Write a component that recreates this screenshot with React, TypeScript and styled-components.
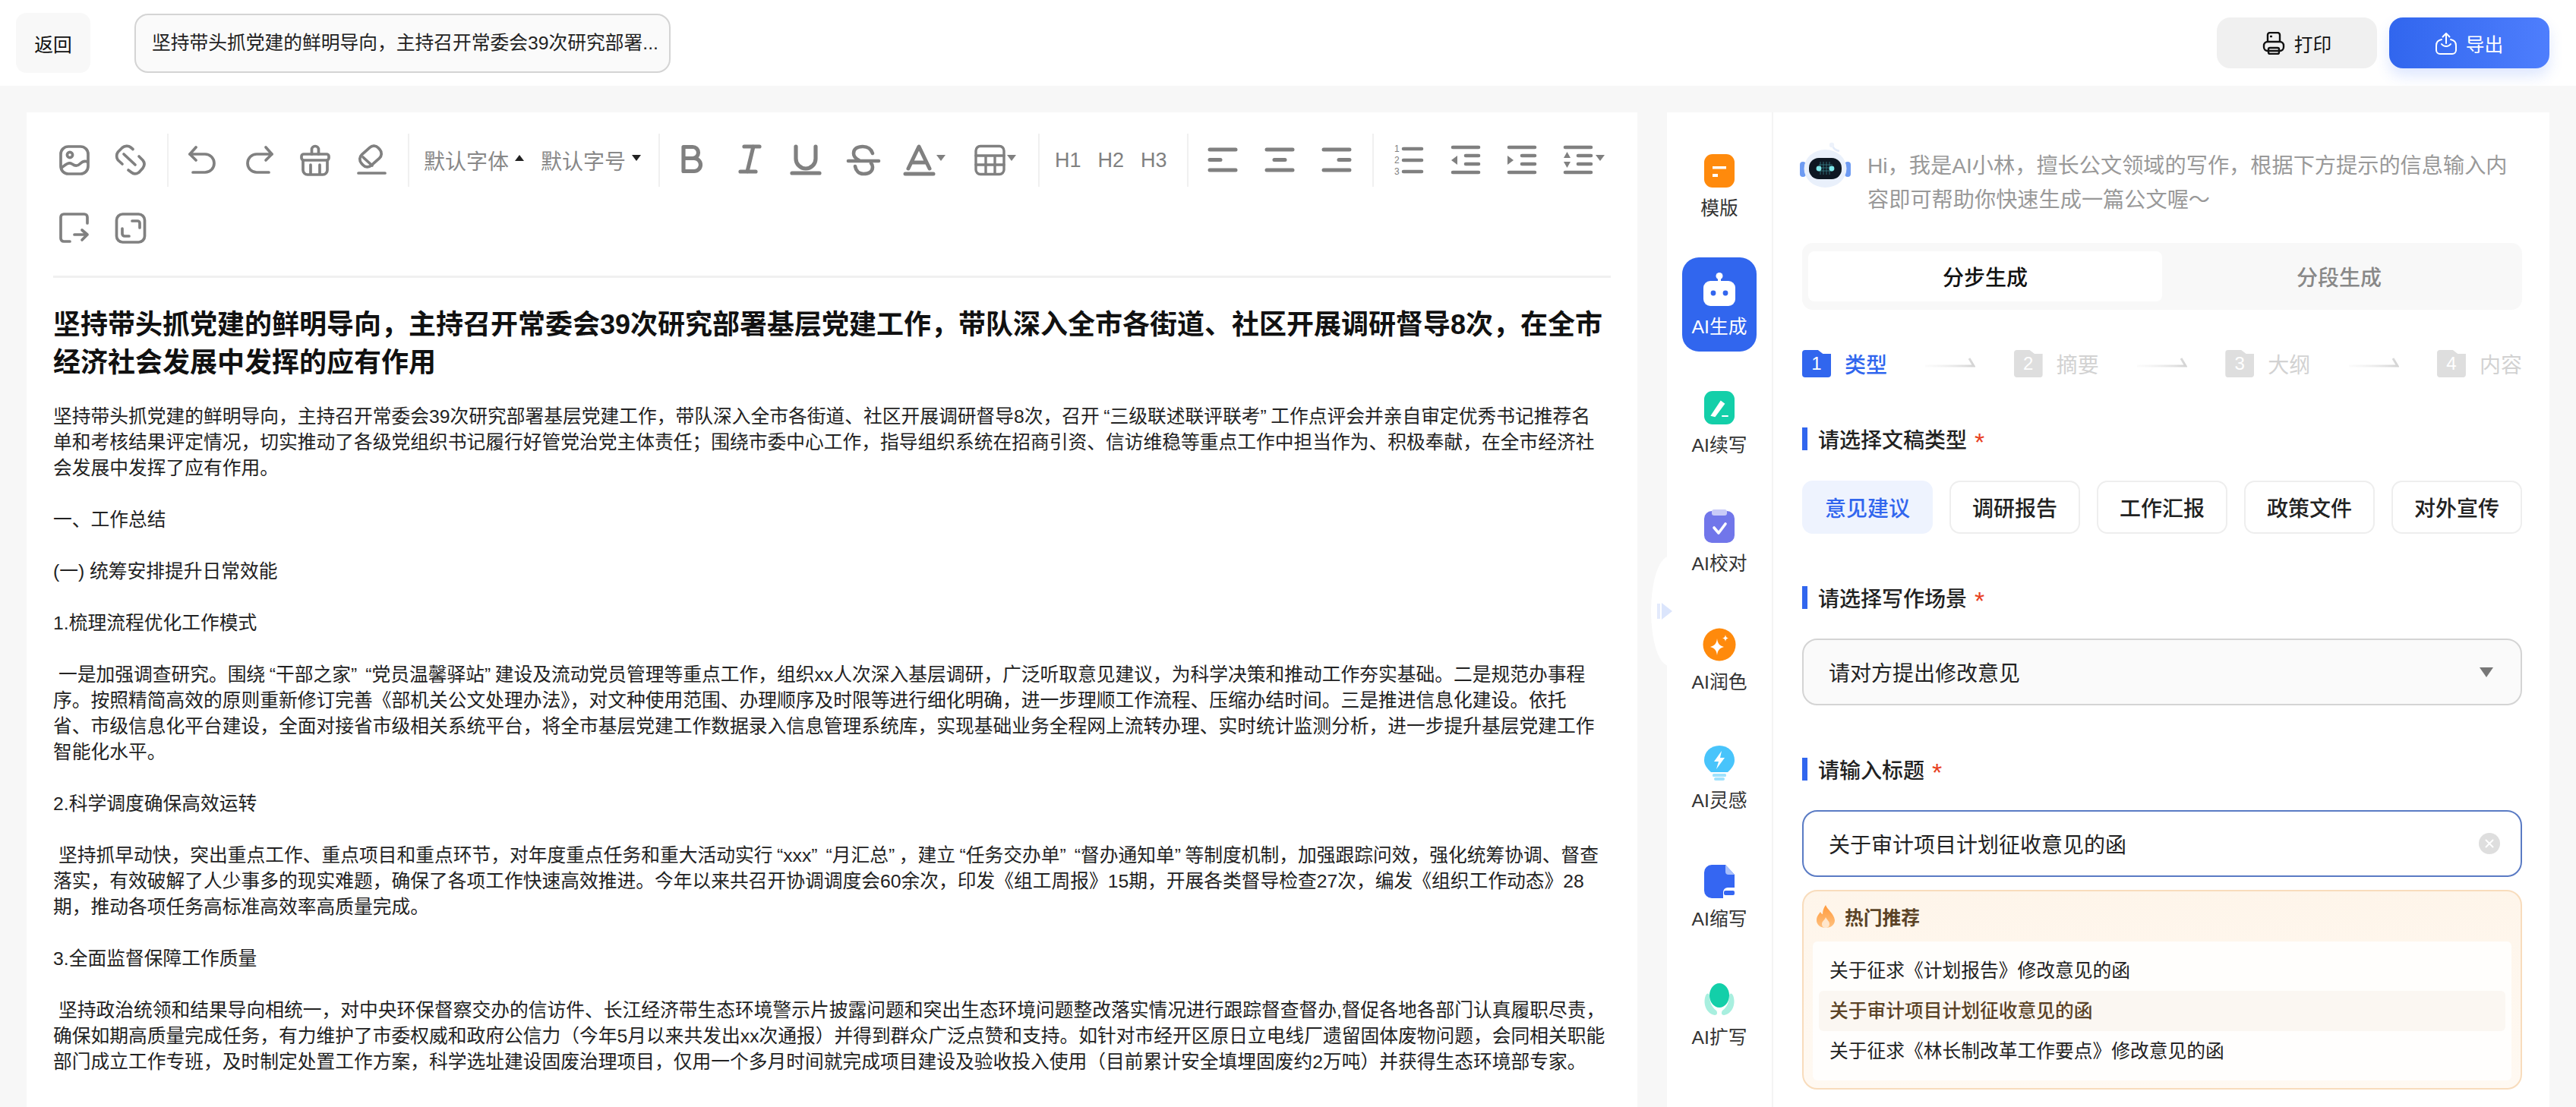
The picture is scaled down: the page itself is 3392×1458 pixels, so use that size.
import React from "react";
import styled, { createGlobalStyle } from "styled-components";

const TITLE_TEXT = "坚持带头抓党建的鲜明导向，主持召开常委会39次研究部署...";

const PARAGRAPHS = [
  [
    "坚持带头抓党建的鲜明导向，主持召开常委会39次研究部署基层党建工作，带队深入全市各街道、社区开展调研督导8次，召开“三级联述联评联考”工作点评会并亲自审定优秀书记推荐名",
    "单和考核结果评定情况，切实推动了各级党组织书记履行好管党治党主体责任；围绕市委中心工作，指导组织系统在招商引资、信访维稳等重点工作中担当作为、积极奉献，在全市经济社",
    "会发展中发挥了应有作用。",
  ],
  ["一、工作总结"],
  ["(一) 统筹安排提升日常效能"],
  ["1.梳理流程优化工作模式"],
  [
    " 一是加强调查研究。围绕“干部之家”“党员温馨驿站”建设及流动党员管理等重点工作，组织xx人次深入基层调研，广泛听取意见建议，为科学决策和推动工作夯实基础。二是规范办事程",
    "序。按照精简高效的原则重新修订完善《部机关公文处理办法》，对文种使用范围、办理顺序及时限等进行细化明确，进一步理顺工作流程、压缩办结时间。三是推进信息化建设。依托",
    "省、市级信息化平台建设，全面对接省市级相关系统平台，将全市基层党建工作数据录入信息管理系统库，实现基础业务全程网上流转办理、实时统计监测分析，进一步提升基层党建工作",
    "智能化水平。",
  ],
  ["2.科学调度确保高效运转"],
  [
    " 坚持抓早动快，突出重点工作、重点项目和重点环节，对年度重点任务和重大活动实行“xxx”“月汇总”，建立“任务交办单”“督办通知单”等制度机制，加强跟踪问效，强化统筹协调、督查",
    "落实，有效破解了人少事多的现实难题，确保了各项工作快速高效推进。今年以来共召开协调调度会60余次，印发《组工周报》15期，开展各类督导检查27次，编发《组织工作动态》28",
    "期，推动各项任务高标准高效率高质量完成。",
  ],
  ["3.全面监督保障工作质量"],
  [
    " 坚持政治统领和结果导向相统一，对中央环保督察交办的信访件、长江经济带生态环境警示片披露问题和突出生态环境问题整改落实情况进行跟踪督查督办,督促各地各部门认真履职尽责，",
    "确保如期高质量完成任务，有力维护了市委权威和政府公信力（今年5月以来共发出xx次通报）并得到群众广泛点赞和支持。如针对市经开区原日立电线厂遗留固体废物问题，会同相关职能",
    "部门成立工作专班，及时制定处置工作方案，科学选址建设固废治理项目，仅用一个多月时间就完成项目建设及验收投入使用（目前累计安全填埋固废约2万吨）并获得生态环境部专家。",
  ],
];

const DOC_TYPES = ["意见建议", "调研报告", "工作汇报", "政策文件", "对外宣传"];
const STEPS = ["类型", "摘要", "大纲", "内容"];
const HOT_ITEMS = [
  "关于征求《计划报告》修改意见的函",
  "关于审计项目计划征收意见的函",
  "关于征求《林长制改革工作要点》修改意见的函",
];

const Stroke: React.FC<{ w?: number; children: React.ReactNode }> = ({ w = 3.7, children }) => (
  <ToolSvg viewBox="0 0 40 40" fill="none" stroke="#808080" strokeWidth={w} strokeLinecap="round" strokeLinejoin="round">
    {children}
  </ToolSvg>
);

const ImageIcon = () => (
  <Stroke>
    <rect x="2" y="2" width="36" height="36" rx="10" />
    <circle cx="14" cy="13" r="3.6" />
    <path d="M3 30C8 26 12 22 17 25C21 28 24 28 27 25C30 22 33 20 37 22" />
  </Stroke>
);
const LinkIcon = () => (
  <Stroke>
    <path d="M23 5.5L20 3C17 .5 12 1 9 3.5L3.5 9C1 12 1 17 3.5 20L9 25" />
    <path d="M17 33L21 36C24 38.5 28 38 31 36L36 30.5C38.5 27 38.5 23 36 20L31 15" />
    <path d="M11 12L26 26" />
  </Stroke>
);
const UndoIcon = () => (
  <Stroke>
    <path d="M11 3L3 12L11 20" />
    <path d="M3 12H23A12 12 0 0 1 23 36H7" />
  </Stroke>
);
const RedoIcon = () => (
  <Stroke>
    <path d="M29 3L37 12L29 20" />
    <path d="M37 12H17A12 12 0 0 0 17 36H33" />
  </Stroke>
);
const BrushIcon = () => (
  <Stroke>
    <path d="M15.5 12V6a4.5 4.5 0 0 1 9 0V12" />
    <rect x="2" y="12" width="36" height="8" rx="3" />
    <path d="M4 20V33a6 6 0 0 0 6 6H30a6 6 0 0 0 6-6V20" />
    <path d="M14 26V38M26 26V38" />
  </Stroke>
);
const EraserIcon = () => (
  <Stroke>
    <rect x="-15" y="-9.5" width="30" height="19" rx="8" transform="translate(19 15) rotate(-42)" />
    <path d="M9 16L21 27" />
    <path d="M3 37H38" />
  </Stroke>
);
const BoldIcon = () => (
  <Stroke w={5.2}>
    <path d="M8 2.5H20a7.5 7.5 0 0 1 0 15H8M20 17.5H22a8.5 8.5 0 0 1 0 17H8V2.5" />
  </Stroke>
);
const ItalicIcon = () => (
  <Stroke w={5.2}>
    <path d="M13 2H33M8 35H28M25 2L17 35" />
  </Stroke>
);
const UnderlineIcon = () => (
  <Stroke w={5.2}>
    <path d="M7 2V18a13 13 0 0 0 26 0V2" />
    <path d="M2 37H38" />
  </Stroke>
);
const StrikeIcon = () => (
  <Stroke w={4.6}>
    <path d="M33 11C31 5 26 2 20 2C13 2 8 5 8 11C8 15 11 18 15 20" />
    <path d="M10 28C11 34 15 38 21 38C28 38 33 35 33 29C33 27 32 25 31 24" />
    <path d="M1 21H41" />
  </Stroke>
);
const ColorIcon = () => (
  <Stroke w={5}>
    <path d="M6 31L20 2L34 31M10 23H30" />
    <path d="M2 38H39" />
  </Stroke>
);
const TableIcon = () => (
  <Stroke w={3.4}>
    <rect x="2" y="1.5" width="37" height="37" rx="6" />
    <path d="M2 14H39M2 26H39M15 14V38M27 14V38" />
  </Stroke>
);
const AlignIcon: React.FC<{ mid: string }> = ({ mid }) => (
  <Stroke w={5}>
    <path d="M3 6H37" />
    <path d={mid} />
    <path d="M3 33H37" />
  </Stroke>
);
const ListIcon = () => (
  <ToolSvg viewBox="0 0 40 40" fill="none" stroke="#808080" strokeWidth={4.6} strokeLinecap="round">
    <path d="M12 5H36M12 20H36M12 35H36" />
    <g fill="#808080" stroke="none" fontFamily="Liberation Sans" fontSize="12">
      <text x="0" y="9">1</text>
      <text x="0" y="24">2</text>
      <text x="0" y="39">3</text>
    </g>
  </ToolSvg>
);
const IndentIcon: React.FC<{ arrow: string }> = ({ arrow }) => (
  <ToolSvg viewBox="0 0 40 40" fill="none" stroke="#808080" strokeWidth={4.6} strokeLinecap="round">
    <path d="M3 3H37M3 36H37M20 14H37M20 25H37" />
    <path d={arrow} fill="#808080" stroke="none" />
  </ToolSvg>
);
const FileOutIcon = () => (
  <Stroke>
    <path d="M37 14V6a4 4 0 0 0-4-4H6a4 4 0 0 0-4 4V34a4 4 0 0 0 4 4H14" />
    <path d="M20 29H37M30 23L37 29L30 36" />
  </Stroke>
);
const ExpandIcon = () => (
  <Stroke>
    <rect x="1.5" y="2" width="37" height="37" rx="8" />
    <path d="M22 11H29a3 3 0 0 1 3 3V20M9 21V28a3 3 0 0 0 3 3H18" />
  </Stroke>
);

const PrinterIcon = () => (
  <svg width="30" height="30" viewBox="0 0 30 30" fill="none" stroke="#111" strokeWidth="2.4" strokeLinejoin="round">
    <path d="M7 13V4a3 3 0 0 1 3-3H20a3 3 0 0 1 3 3V13" />
    <rect x="2" y="13" width="26" height="12" rx="5" />
    <rect x="8" y="21" width="14" height="8" rx="2" />
    <path d="M10 6H13" />
  </svg>
);
const ExportIcon = () => (
  <svg width="28" height="30" viewBox="0 0 28 30" fill="none" stroke="#fff" strokeWidth="2" strokeLinecap="round" strokeLinejoin="round">
    <path d="M14 15V2M9.5 6.5L14 2L18.5 6.5" />
    <path d="M8 10C3 11 1 14 1 18V24a5 5 0 0 0 5 5H22a5 5 0 0 0 5-5V18C27 14 25 11 20 10" />
    <path d="M8 16C11 20 17 20 20 16" />
  </svg>
);

const TemplateGlyph = () => (
  <svg width="40" height="44" viewBox="0 0 40 44">
    <rect width="40" height="44" rx="11" fill="#ff8a0c" />
    <path d="M11 16H29V19.5H11ZM11 26H18V30H11Z" fill="#fff" />
  </svg>
);
const RobotGlyph = () => (
  <svg width="44" height="44" viewBox="0 0 44 44">
    <circle cx="22" cy="4.5" r="4.5" fill="#fff" />
    <rect x="20" y="6" width="4" height="8" fill="#fff" />
    <rect x="1" y="11" width="42" height="33" rx="9" fill="#fff" />
    <circle cx="14" cy="27" r="3.4" fill="#3366ee" />
    <circle cx="30" cy="27" r="3.4" fill="#3366ee" />
  </svg>
);
const ContinueGlyph = () => (
  <svg width="40" height="44" viewBox="0 0 40 44">
    <rect width="40" height="44" rx="11" fill="#13cfa9" />
    <path d="M10 32L22 14L26 17L14 33ZM24 33H31" fill="#fff" stroke="#fff" strokeWidth="2" strokeLinecap="round" />
  </svg>
);
const ProofGlyph = () => (
  <svg width="40" height="44" viewBox="0 0 40 44">
    <rect y="2" width="40" height="42" rx="10" fill="#7176ea" />
    <rect x="10" y="0" width="20" height="8" rx="3" fill="#c9cbf8" />
    <path d="M13 24L19 31L28 19" fill="none" stroke="#fff" strokeWidth="3.6" strokeLinecap="round" strokeLinejoin="round" />
  </svg>
);
const PolishGlyph = () => (
  <svg width="44" height="44" viewBox="0 0 44 44">
    <circle cx="22" cy="22" r="21.5" fill="#ff8a0c" />
    <path d="M19 14C20 21 22 23 28 25C22 27 20 29 19 36C18 29 16 27 10 25C16 23 18 21 19 14Z" fill="#fff" />
    <path d="M30 9C30.5 12 31.5 13 34 13.5C31.5 14 30.5 15 30 18C29.5 15 28.5 14 26 13.5C28.5 13 29.5 12 30 9Z" fill="#fff" />
  </svg>
);
const IdeaGlyph = () => (
  <svg width="40" height="46" viewBox="0 0 40 46">
    <path d="M20 0C8.5 0 0 8.5 0 19C0 26 4 30 9 35H31C36 30 40 26 40 19C40 8.5 31.5 0 20 0Z" fill="#48c4fb" />
    <rect x="11" y="37" width="18" height="4" rx="1.5" fill="#9fe2fd" />
    <rect x="13" y="42" width="14" height="4" rx="2" fill="#9fe2fd" />
    <path d="M23 7L13 21H19L16 31L27 16H21Z" fill="#fff" />
  </svg>
);
const ShrinkGlyph = () => (
  <svg width="40" height="44" viewBox="0 0 40 44">
    <path d="M10 0H28L40 13V30H31A6 6 0 0 0 25 36V44H10A10 10 0 0 1 0 34V10A10 10 0 0 1 10 0Z" fill="#3566f2" />
    <path d="M28 0L40 13H32A4 4 0 0 1 28 9Z" fill="#a9c0fb" />
    <rect x="26" y="34" width="14" height="6" rx="2" fill="#3566f2" />
  </svg>
);
const ExpandGlyph = () => (
  <svg width="44" height="44" viewBox="0 0 44 44">
    <path d="M4 16C0 26 4 40 16 42C19 42 20 39 18 36C12 32 9 24 9 17C9 13 6 12 4 16Z" fill="#a8efdf" />
    <path d="M40 16C44 26 40 40 28 42C25 42 24 39 26 36C32 32 35 24 35 17C35 13 38 12 40 16Z" fill="#a8efdf" />
    <ellipse cx="22" cy="16" rx="13" ry="16" fill="#13cfa9" />
  </svg>
);

const NAV_ITEMS = [
  { label: "模版", Glyph: TemplateGlyph },
  { label: "AI生成", Glyph: RobotGlyph, active: true },
  { label: "AI续写", Glyph: ContinueGlyph },
  { label: "AI校对", Glyph: ProofGlyph },
  { label: "AI润色", Glyph: PolishGlyph },
  { label: "AI灵感", Glyph: IdeaGlyph },
  { label: "AI缩写", Glyph: ShrinkGlyph },
  { label: "AI扩写", Glyph: ExpandGlyph },
];

const RobotAvatar = () => (
  <AvatarSvg viewBox="0 0 67 60">
    <path d="M52 12C48 11 45 10 43.5 6" fill="none" stroke="#e4ecfa" strokeWidth="2.5" />
    <circle cx="42" cy="4" r="3.2" fill="#edf2fb" />
    <rect x="0" y="26" width="8" height="20" rx="4" fill="#6e9bf2" />
    <rect x="59" y="26" width="8" height="20" rx="4" fill="#6e9bf2" />
    <ellipse cx="33.5" cy="35" rx="28" ry="25" fill="#e9f0fb" />
    <rect x="12" y="21" width="43" height="28" rx="13" fill="#0e1722" />
    <g stroke="#3d8d95" strokeWidth="0.7">
      <path d="M24 34H44M25 30H43M25 38H43M27 26V43M31 26V43M35 26V43M39 26V43" />
    </g>
    <circle cx="25" cy="35" r="3.4" fill="#7fe8ea" />
    <circle cx="42" cy="35" r="3.4" fill="#7fe8ea" />
  </AvatarSvg>
);

const FireIcon = () => (
  <svg width="26" height="30" viewBox="0 0 26 30">
    <defs>
      <linearGradient id="fire" x1="0" y1="0" x2="0" y2="1">
        <stop offset="0" stopColor="#ff9a3c" />
        <stop offset="1" stopColor="#ffc07e" />
      </linearGradient>
    </defs>
    <path d="M13 0C15 6 24 11 25 20C25 26 20 30 13 30C6 30 1 26 1 20C1 15 4 12 6 9C7 11 8 12 9 12C9 8 10 4 13 0Z" fill="url(#fire)" />
    <path d="M13 16C14 19 18 21 18 25C18 28 16 30 13 30C10 30 8 28 8 25C8 21 12 20 13 16Z" fill="#ffe6cc" />
  </svg>
);

const StepArrow = ({ id }: { id: string }) => (
  <ArrowSvg viewBox="0 0 66 16" fill="none">
    <defs>
      <linearGradient id={id} x1="0" y1="0" x2="1" y2="0">
        <stop offset="0" stopColor="#eeeeee" stopOpacity="0.2" />
        <stop offset="1" stopColor="#d4d4d4" />
      </linearGradient>
    </defs>
    <path d="M0 11H64L58 1" stroke={`url(#${id})`} strokeWidth="3" />
  </ArrowSvg>
);

// the curly quotes need more room than the latin glyphs give them
const withQuotes = (text: string) =>
  text.split(/([“”])/).map((part, i) =>
    part === "“" || part === "”" ? (
      <Quote key={i} $open={part === "“"}>
        {part}
      </Quote>
    ) : (
      part
    )
  );

const App: React.FC = () => {
  return (
    <>
      <GlobalStyle />
      <Page>
        <Header>
          <HeaderLeft>
            <BackButton>返回</BackButton>
            <TitleInput>{TITLE_TEXT}</TitleInput>
          </HeaderLeft>
          <HeaderRight>
            <PrintButton>
              <PrinterIcon />
              打印
            </PrintButton>
            <ExportButton>
              <ExportIcon />
              导出
            </ExportButton>
          </HeaderRight>
        </Header>

        <Main>
          <Editor>
            <Toolbar>
              <ToolGroup $gap={34} $left={43} $right={28}>
                <ImageIcon />
                <LinkIcon />
              </ToolGroup>
              <ToolGroup $gap={34} $left={25} $right={28} $line>
                <UndoIcon />
                <RedoIcon />
                <BrushIcon />
                <EraserIcon />
              </ToolGroup>
              <ToolGroup $gap={22} $left={19} $right={23} $line>
                <FontPick>
                  默认字体
                  <Caret $up $dark />
                </FontPick>
                <FontPick>
                  默认字号
                  <Caret $dark />
                </FontPick>
              </ToolGroup>
              <ToolGroup $gap={34.6} $left={23} $right={26} $line>
                <BoldIcon />
                <ItalicIcon />
                <UnderlineIcon />
                <StrikeIcon />
                <WithCaret>
                  <ColorIcon />
                  <Caret />
                </WithCaret>
                <WithCaret>
                  <TableIcon />
                  <Caret />
                </WithCaret>
              </ToolGroup>
              <ToolGroup $gap={22} $left={20} $right={26.5} $line>
                <HeadingTool>H1</HeadingTool>
                <HeadingTool>H2</HeadingTool>
                <HeadingTool>H3</HeadingTool>
              </ToolGroup>
              <ToolGroup $gap={35} $left={25} $right={27} $line>
                <AlignIcon mid="M3 19.5H17" />
                <AlignIcon mid="M13 19.5H27" />
                <AlignIcon mid="M23 19.5H37" />
              </ToolGroup>
              <ToolGroup $gap={34} $left={27} $right={0} $line>
                <ListIcon />
                <IndentIcon arrow="M9 14V26L1 20Z" />
                <IndentIcon arrow="M1 14V26L9 20Z" />
                <WithCaret>
                  <IndentIcon arrow="M5.5 9L10 17H1ZM1 22H10L5.5 30Z" />
                  <Caret />
                </WithCaret>
              </ToolGroup>
              <ToolGroup $gap={34} $left={43} $right={0}>
                <FileOutIcon />
                <ExpandIcon />
              </ToolGroup>
            </Toolbar>

            <Article>
              <ArticleTitle>
                坚持带头抓党建的鲜明导向，主持召开常委会39次研究部署基层党建工作，带队深入全市各街道、社区开展调研督导8次，在全市
                <br />
                经济社会发展中发挥的应有作用
              </ArticleTitle>
              {PARAGRAPHS.map((lines, i) => (
                <Paragraph key={i}>
                  {lines.map((line, j) => (
                    <Line key={j}>{withQuotes(line)}</Line>
                  ))}
                </Paragraph>
              ))}
            </Article>
          </Editor>

          <Panel>
            <CollapseHandle>
              <svg width="20" height="22" viewBox="0 0 20 22">
                <rect x="0" y="1" width="4" height="20" fill="#e3eafc" />
                <path d="M6 0L20 11L6 22Z" fill="#dbe5fc" />
              </svg>
            </CollapseHandle>

            <SideNav>
              {NAV_ITEMS.map(({ label, Glyph, active }) => (
                <NavItem key={label} $active={!!active}>
                  <NavGlyph>
                    <Glyph />
                  </NavGlyph>
                  {label}
                </NavItem>
              ))}
            </SideNav>

            <Content>
              <Greeting>
                <RobotAvatar />
                <GreetingText>
                  Hi，我是AI小林，擅长公文领域的写作，根据下方提示的信息输入内
                  <br />
                  容即可帮助你快速生成一篇公文喔～
                </GreetingText>
              </Greeting>

              <Tabs>
                <Tab $active>分步生成</Tab>
                <Tab>分段生成</Tab>
              </Tabs>

              <Steps>
                {STEPS.map((step, i) => (
                  <React.Fragment key={step}>
                    {i > 0 && <StepArrow id={`arrow${i}`} />}
                    <Step>
                      <StepBadge $on={i === 0}>{i + 1}</StepBadge>
                      <StepLabel $on={i === 0}>{step}</StepLabel>
                    </Step>
                  </React.Fragment>
                ))}
              </Steps>

              <SectionLabel $top={66}>
                请选择文稿类型<Star>*</Star>
              </SectionLabel>
              <TypeRow>
                {DOC_TYPES.map((type, i) => (
                  <TypeButton key={type} $active={i === 0}>
                    {type}
                  </TypeButton>
                ))}
              </TypeRow>

              <SectionLabel $top={69}>
                请选择写作场景<Star>*</Star>
              </SectionLabel>
              <SelectBox>
                请对方提出修改意见
                <SelectCaret />
              </SelectBox>

              <SectionLabel $top={69}>
                请输入标题<Star>*</Star>
              </SectionLabel>
              <TextBox>
                关于审计项目计划征收意见的函
                <ClearIcon viewBox="0 0 28 28">
                  <circle cx="14" cy="14" r="14" fill="#dedede" />
                  <path d="M9.5 9.5L18.5 18.5M18.5 9.5L9.5 18.5" stroke="#fff" strokeWidth="2" strokeLinecap="round" />
                </ClearIcon>
              </TextBox>

              <HotBox>
                <HotTitle>
                  <FireIcon />
                  热门推荐
                </HotTitle>
                <HotList>
                  {HOT_ITEMS.map((item, i) => (
                    <HotRow key={item} $active={i === 1}>
                      {item}
                    </HotRow>
                  ))}
                </HotList>
              </HotBox>
            </Content>
          </Panel>
        </Main>
      </Page>
    </>
  );
};

export default App;

const GlobalStyle = createGlobalStyle`
  * {
    box-sizing: border-box;
  }
  html, body {
    margin: 0;
    padding: 0;
    background: #f7f7f7;
    font-family: "Liberation Sans", "Noto Sans CJK SC", sans-serif;
  }
`;

const Page = styled.div`
  display: flex;
  flex-direction: column;
  width: 3392px;
  height: 1458px;
  overflow: hidden;
  color: #222;
`;

const Header = styled.header`
  display: flex;
  align-items: center;
  justify-content: space-between;
  flex: none;
  height: 113px;
  padding: 0 35px 0 21px;
  background: #fff;
`;

const HeaderLeft = styled.div`
  display: flex;
  align-items: center;
  gap: 58px;
`;

const HeaderRight = styled.div`
  display: flex;
  align-items: center;
  gap: 16px;
`;

const BackButton = styled.div`
  display: flex;
  align-items: center;
  justify-content: center;
  width: 98px;
  height: 79px;
  border-radius: 14px;
  background: #f8f8f8;
  font-size: 24.75px;
  color: #111;
`;

const TitleInput = styled.div`
  width: 706px;
  height: 78px;
  padding-left: 21px;
  border: 2px solid #d4d4d4;
  border-radius: 18px;
  background: #fafafa;
  font-size: 24.75px;
  line-height: 74px;
  color: #222;
  white-space: nowrap;
`;

const ActionButton = styled.div`
  display: flex;
  align-items: center;
  justify-content: center;
  gap: 12px;
  width: 211px;
  height: 67px;
  border-radius: 18px;
  font-size: 24.75px;
`;

const PrintButton = styled(ActionButton)`
  background: #f0f0f0;
  color: #111;
`;

const ExportButton = styled(ActionButton)`
  background: linear-gradient(90deg, #3166ee, #4e7efd);
  color: #fff;
  box-shadow: 0 10px 18px rgba(70, 120, 250, 0.18);
`;

const Main = styled.main`
  display: flex;
  flex: 1;
  gap: 39px;
  min-height: 0;
  padding: 35px 35px 0;
  background: #f7f7f7;
`;

const Editor = styled.section`
  flex: none;
  width: 2121px;
  padding-top: 28px;
  background: #fff;
`;

const Toolbar = styled.div`
  display: flex;
  flex-wrap: wrap;
  row-gap: 19px;
`;

const ToolGroup = styled.div<{ $gap: number; $left: number; $right: number; $line?: boolean }>`
  display: flex;
  align-items: center;
  gap: ${(p) => p.$gap}px;
  height: 70px;
  padding: 0 ${(p) => p.$right}px 0 ${(p) => p.$left}px;
  border-left: ${(p) => (p.$line ? "2px solid #f0f0f0" : "none")};
`;

const ToolSvg = styled.svg`
  flex: none;
  width: 40px;
  height: 40px;
  overflow: visible;
`;

const WithCaret = styled.div`
  display: flex;
  align-items: center;
  gap: 3px;
  padding-right: 3px;
`;

const Caret = styled.span<{ $up?: boolean; $dark?: boolean }>`
  width: 0;
  height: 0;
  flex: none;
  border-left: 6px solid transparent;
  border-right: 6px solid transparent;
  border-top: ${(p) => (p.$up ? "none" : `8px solid ${p.$dark ? "#222" : "#808080"}`)};
  border-bottom: ${(p) => (p.$up ? `8px solid ${p.$dark ? "#222" : "#808080"}` : "none")};
  margin-top: -6px;
`;

const FontPick = styled.div`
  display: flex;
  align-items: center;
  gap: 8px;
  font-size: 28px;
  color: #888;
  white-space: nowrap;
`;

const HeadingTool = styled.div`
  font-size: 27px;
  color: #808080;
`;

const Article = styled.article`
  margin: 28px 35px 0 35px;
  padding-top: 37px;
  border-top: 3px solid #f0f0f0;
`;

const ArticleTitle = styled.h1`
  margin: 0 0 29px;
  font-size: 36px;
  line-height: 50px;
  font-weight: 700;
  color: #111;
  white-space: nowrap;
`;

const Paragraph = styled.div`
  margin-bottom: 34px;
`;

const Line = styled.div`
  font-size: 24.75px;
  line-height: 34px;
  color: #222;
  white-space: pre;
`;

const Quote = styled.span<{ $open: boolean }>`
  margin: ${(p) => (p.$open ? "0 0 0 5.5px" : "0 5.5px 0 0")};
`;

const Panel = styled.section`
  position: relative;
  display: flex;
  flex: none;
  width: 1162px;
  background: #fff;
`;

const CollapseHandle = styled.div`
  position: absolute;
  top: 585px;
  left: -21px;
  display: flex;
  align-items: center;
  width: 30px;
  height: 144px;
  padding-left: 8px;
  border-radius: 24px 0 0 24px / 50% 0 0 50%;
  background: #fff;

  svg {
    flex: none;
  }
`;

const SideNav = styled.nav`
  display: flex;
  flex: none;
  flex-direction: column;
  align-items: center;
  gap: 32px;
  width: 140px;
  padding-top: 35px;
  border-right: 2px solid #f4f4f4;
`;

const NavItem = styled.div<{ $active: boolean }>`
  display: flex;
  flex-direction: column;
  align-items: center;
  flex: none;
  width: 98px;
  height: 124px;
  padding-top: 20px;
  border-radius: 22px;
  background: ${(p) => (p.$active ? "#3166ee" : "transparent")};
  color: ${(p) => (p.$active ? "#fff" : "#333")};
  font-size: 24.75px;
  line-height: 34px;
`;

const NavGlyph = styled.div`
  display: flex;
  align-items: center;
  justify-content: center;
  height: 44px;
  margin-bottom: 11px;
`;

const Content = styled.div`
  flex: 1;
  min-width: 0;
  padding: 39px 36px 0 38px;
`;

const Greeting = styled.div`
  display: flex;
  gap: 22px;
  margin-left: -3px;
`;

const AvatarSvg = styled.svg`
  flex: none;
  width: 67px;
  height: 60px;
`;

const GreetingText = styled.p`
  margin: 9px 0 0;
  font-size: 28.2px;
  line-height: 45px;
  color: #999;
  white-space: nowrap;
`;

const Tabs = styled.div`
  display: flex;
  height: 88px;
  margin-top: 34px;
  padding: 11px 8px;
  border-radius: 14px;
  background: #f8f8f8;
`;

const Tab = styled.div<{ $active?: boolean }>`
  display: flex;
  align-items: center;
  justify-content: center;
  flex: 1;
  border-radius: 8px;
  background: ${(p) => (p.$active ? "#fff" : "transparent")};
  color: ${(p) => (p.$active ? "#111" : "#888")};
  font-size: 28px;
  font-weight: 500;
`;

const Steps = styled.div`
  display: flex;
  align-items: center;
  justify-content: space-between;
  height: 36px;
  margin-top: 53px;
`;

const ArrowSvg = styled.svg`
  flex: none;
  width: 66px;
  height: 16px;
`;

const Step = styled.div`
  display: flex;
  align-items: center;
  gap: 18px;
`;

const StepBadge = styled.span<{ $on: boolean }>`
  display: flex;
  align-items: center;
  justify-content: center;
  width: 38px;
  height: 36px;
  border-radius: 4px;
  background: ${(p) => (p.$on ? "#3166ee" : "#dedede")};
  color: #fff;
  font-size: 24px;
  clip-path: polygon(0 0, 55% 0, 72% 14%, 100% 14%, 100% 100%, 0 100%);
`;

const StepLabel = styled.span<{ $on: boolean }>`
  font-size: 28px;
  font-weight: ${(p) => (p.$on ? 500 : 400)};
  color: ${(p) => (p.$on ? "#3166ee" : "#d2d2d2")};
`;

const SectionLabel = styled.div<{ $top: number }>`
  display: flex;
  align-items: center;
  height: 30px;
  margin-top: ${(p) => p.$top}px;
  padding-left: 14px;
  border-left: 7px solid #3166ee;
  font-size: 28px;
  font-weight: 500;
  color: #222;
`;

const Star = styled.span`
  margin-left: 10px;
  padding-top: 8px;
  font-size: 34px;
  color: #e8411f;
`;

const TypeRow = styled.div`
  display: flex;
  justify-content: space-between;
  margin-top: 40px;
`;

const TypeButton = styled.div<{ $active: boolean }>`
  display: flex;
  align-items: center;
  justify-content: center;
  width: 172px;
  height: 70px;
  border: 2px solid ${(p) => (p.$active ? "#eef3fe" : "#eeeeee")};
  border-radius: 14px;
  background: ${(p) => (p.$active ? "#eef3fe" : "#fff")};
  color: ${(p) => (p.$active ? "#3166ee" : "#222")};
  font-size: 28px;
  font-weight: 500;
`;

const SelectBox = styled.div`
  display: flex;
  align-items: center;
  justify-content: space-between;
  height: 88px;
  margin-top: 39px;
  padding: 0 36px 0 33px;
  border: 2px solid #d4d4d4;
  border-radius: 20px;
  background: #fafafa;
  font-size: 28px;
  color: #222;
`;

const SelectCaret = styled.span`
  width: 0;
  height: 0;
  border-left: 9px solid transparent;
  border-right: 9px solid transparent;
  border-top: 13px solid #777;
`;

const TextBox = styled.div`
  display: flex;
  align-items: center;
  justify-content: space-between;
  height: 88px;
  margin-top: 39px;
  padding: 0 27px 0 33px;
  border: 2px solid #5a7bc4;
  border-radius: 20px;
  background: #fff;
  font-size: 28px;
  color: #222;
`;

const ClearIcon = styled.svg`
  width: 28px;
  height: 28px;
`;

const HotBox = styled.div`
  height: 263px;
  margin-top: 17px;
  padding: 0 12px;
  border: 2px solid #f8dcbc;
  border-radius: 20px;
  background: linear-gradient(180deg, #fef5ea, #fff9f2);
`;

const HotTitle = styled.div`
  display: flex;
  align-items: center;
  gap: 12px;
  height: 66px;
  padding-left: 4px;
  font-size: 24.75px;
  font-weight: 700;
  color: #5b4326;
`;

const HotList = styled.div`
  display: flex;
  flex-direction: column;
  justify-content: center;
  height: 183px;
  padding: 0 8px;
  border-radius: 6px;
  background: rgba(255, 255, 255, 0.82);
`;

const HotRow = styled.div<{ $active: boolean }>`
  height: 53px;
  padding-left: 14px;
  border-radius: 6px;
  background: ${(p) => (p.$active ? "#fbf7f2" : "transparent")};
  font-size: 24.75px;
  line-height: 53px;
  font-weight: ${(p) => (p.$active ? 500 : 400)};
  color: ${(p) => (p.$active ? "#5b4326" : "#222")};
`;
